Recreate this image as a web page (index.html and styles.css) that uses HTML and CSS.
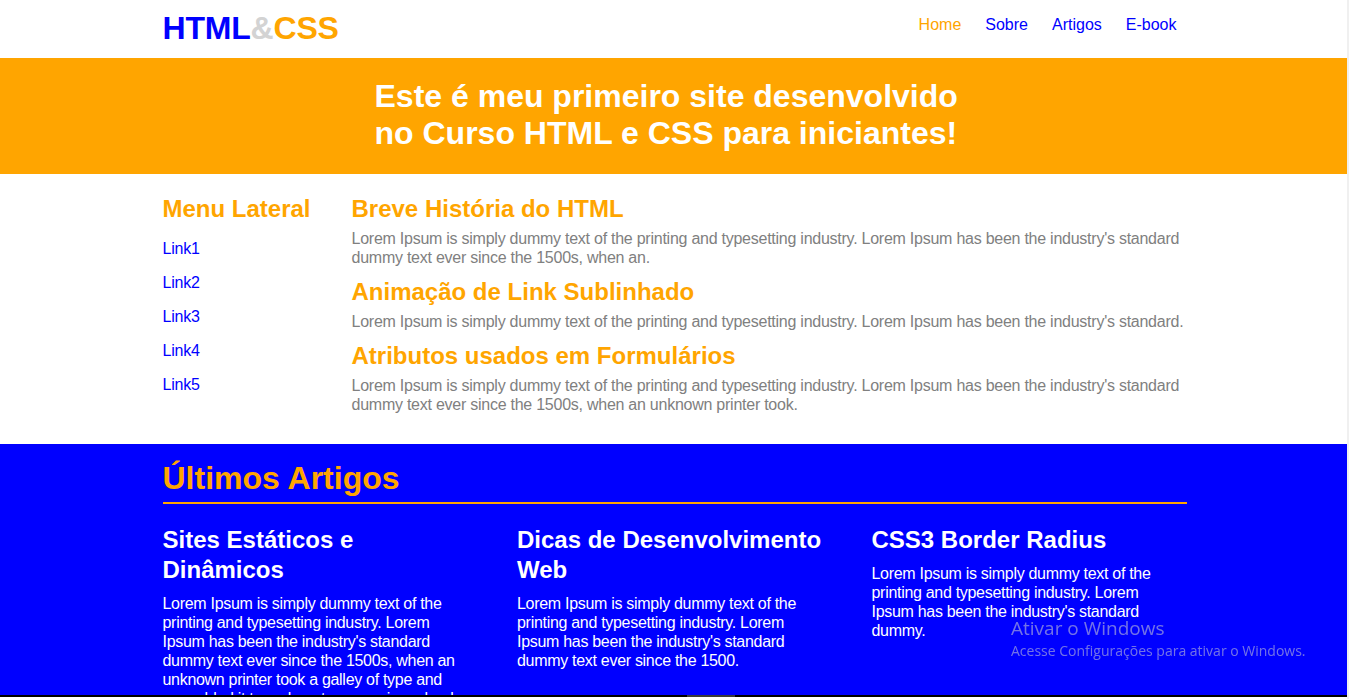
FILE: index.html
```html
<!DOCTYPE html>
<html lang="pt-BR">
<head>
<meta charset="utf-8">
<title>HTML&amp;CSS</title>
<link rel="stylesheet" href="styles.css">
</head>
<body>
<header class="topbar">
  <div class="container topbar-inner">
    <div class="logo"><span class="logo-html">HTML</span><span class="logo-amp">&amp;</span><span class="logo-css">CSS</span></div>
    <nav class="nav">
      <a class="nav-link nav-active" href="#">Home</a>
      <a class="nav-link" href="#">Sobre</a>
      <a class="nav-link" href="#">Artigos</a>
      <a class="nav-link" href="#">E-book</a>
    </nav>
  </div>
</header>

<section class="hero">
  <h1 class="hero-title">Este é meu primeiro site desenvolvido no Curso HTML e CSS para iniciantes!</h1>
</section>

<main class="container main">
  <aside class="sidebar">
    <h2 class="sidebar-title">Menu Lateral</h2>
    <ul class="sidebar-list">
      <li><a href="#">Link1</a></li>
      <li><a href="#">Link2</a></li>
      <li><a href="#">Link3</a></li>
      <li><a href="#">Link4</a></li>
      <li><a href="#">Link5</a></li>
    </ul>
  </aside>
  <div class="content">
    <h2 class="post-title">Breve História do HTML</h2>
    <p class="post-text">Lorem Ipsum is simply dummy text of the printing and typesetting industry. Lorem Ipsum has been the industry's standard dummy text ever since the 1500s, when an.</p>
    <h2 class="post-title">Animação de Link Sublinhado</h2>
    <p class="post-text">Lorem Ipsum is simply dummy text of the printing and typesetting industry. Lorem Ipsum has been the industry's standard.</p>
    <h2 class="post-title">Atributos usados em Formulários</h2>
    <p class="post-text">Lorem Ipsum is simply dummy text of the printing and typesetting industry. Lorem Ipsum has been the industry's standard dummy text ever since the 1500s, when an unknown printer took.</p>
  </div>
</main>

<section class="latest">
  <div class="container">
    <h2 class="latest-title">Últimos Artigos</h2>
    <div class="articles">
      <article class="article">
        <h3 class="article-title">Sites Estáticos e Dinâmicos</h3>
        <p class="article-text">Lorem Ipsum is simply dummy text of the printing and typesetting industry. Lorem Ipsum has been the industry's standard dummy text ever since the 1500s, when an unknown printer took a galley of type and scrambled it to make a type specimen book.</p>
      </article>
      <article class="article">
        <h3 class="article-title">Dicas de Desenvolvimento Web</h3>
        <p class="article-text">Lorem Ipsum is simply dummy text of the printing and typesetting industry. Lorem Ipsum has been the industry's standard dummy text ever since the 1500.</p>
      </article>
      <article class="article">
        <h3 class="article-title">CSS3 Border Radius</h3>
        <p class="article-text">Lorem Ipsum is simply dummy text of the printing and typesetting industry. Lorem Ipsum has been the industry's standard dummy.</p>
      </article>
    </div>
  </div>
</section>

<div class="win-watermark">
  <div class="win-line1">Ativar o Windows</div>
  <div class="win-line2">Acesse Configurações para ativar o Windows.</div>
</div>
<div class="edge-right"></div>
<div class="edge-bottom"><div class="edge-thumb"></div></div>
</body>
</html>
```

FILE: styles.css
```css
html, body {
  margin: 0;
  padding: 0;
}

body {
  font-family: "Liberation Sans", Arial, sans-serif;
  background: #ffffff;
  overflow: hidden;
}

.container {
  width: 1024px;
  margin: 0 auto;
}

/* Header */
.topbar {
  height: 58px;
  background: #ffffff;
}

.topbar-inner {
  display: flex;
  justify-content: space-between;
  align-items: flex-start;
  height: 58px;
}

.logo {
  font-size: 32px;
  font-weight: bold;
  padding-top: 10px;
  letter-spacing: -0.2px;
}

.logo-html { color: #0000ff; }
.logo-amp { color: #d3d3d3; }
.logo-css { color: #ffa500; }

.nav {
  display: flex;
  gap: 24px;
  padding-top: 16px;
  padding-right: 10px;
}

.nav-link {
  font-size: 16px;
  color: #0000ff;
  text-decoration: none;
}

.nav-active {
  color: #ffa500;
}

/* Hero */
.hero {
  background: #ffa500;
  padding: 20px 0 22px;
}

.hero-title {
  width: 600px;
  margin: 0 auto;
  color: #ffffff;
  font-size: 32px;
  font-weight: bold;
  line-height: normal;
}

/* Main */
.main {
  display: flex;
  padding: 21px 0 19px;
}

.sidebar {
  width: 189px;
  flex-shrink: 0;
}

.sidebar-title {
  margin: 0 0 9px;
  font-size: 24px;
  color: #ffa500;
}

.sidebar-list {
  list-style: none;
  margin: 0;
  padding: 0;
}

.sidebar-list li {
  padding: 8px 0;
  font-size: 16px;
  letter-spacing: -0.2px;
}

.sidebar-list a {
  color: #0000ff;
  text-decoration: none;
}

.content {
  flex: 1;
}

.post-title {
  margin: 0 0 6px;
  font-size: 24px;
  color: #ffa500;
}

.post-text {
  margin: 0 0 11px;
  font-size: 16px;
  line-height: 19px;
  color: #808080;
  letter-spacing: -0.25px;
}

/* Latest */
.latest {
  background: #0000ff;
  padding: 16px 0 40px;
}

.latest-title {
  margin: 0;
  padding-bottom: 5px;
  border-bottom: 2px solid #ffa500;
  font-size: 32px;
  color: #ffa500;
}

.articles {
  display: grid;
  grid-template-columns: 315px 315px 315px;
  column-gap: 39.5px;
  margin-top: 21px;
}

.article-title {
  margin: 0 0 9px;
  font-size: 24px;
  line-height: 30px;
  color: #ffffff;
}

.article-text {
  max-width: 302px;
  margin: 0;
  font-size: 16px;
  line-height: 19px;
  color: #ffffff;
  letter-spacing: -0.3px;
}

/* Screen overlays */
.win-watermark {
  position: fixed;
  left: 1011px;
  top: 615px;
  font-family: "Open Sans", "Noto Sans", sans-serif;
  color: rgba(210, 210, 210, 0.55);
  pointer-events: none;
}

.win-line1 {
  font-size: 19px;
}

.win-line2 {
  font-size: 14px;
}

.edge-right {
  position: fixed;
  top: 0;
  right: 0;
  width: 2px;
  height: 100%;
  background: #f0f0f0;
}

.edge-bottom {
  position: fixed;
  left: 0;
  bottom: 0;
  width: 1347px;
  height: 4px;
  background: #ffffff;
  border-top: 2px solid #000000;
  box-sizing: border-box;
}

.edge-thumb {
  position: absolute;
  left: 687px;
  top: -2px;
  width: 48px;
  height: 2px;
  background: #3a3a3a;
}
```
